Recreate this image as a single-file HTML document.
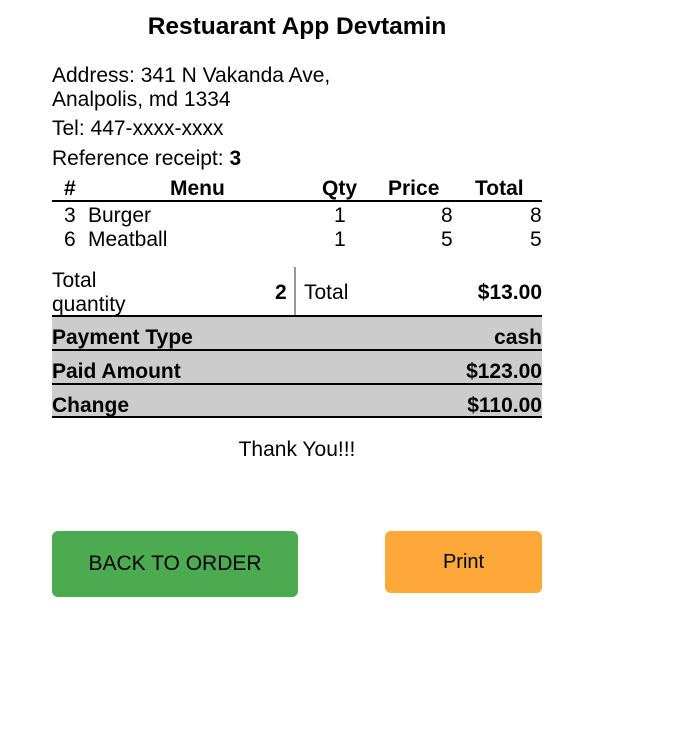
<!DOCTYPE html>
<html><head><style>
body{margin:0;width:697px;height:742px;background:#fff;font-family:"Liberation Sans",Arial,sans-serif;color:#000;position:relative;font-size:21px}
div{position:absolute;white-space:nowrap}
.b{font-weight:bold}
.r{text-align:right}
.line{background:#000;height:2px;left:52px;width:490px}
.gray{background:#ccc;left:52px;width:490px;height:32px}
</style></head><body>
<div class="b" style="left:0;width:594px;text-align:center;top:13px;font-size:24.5px">Restuarant App Devtamin</div>
<div style="left:52px;top:64px;line-height:24px">Address: 341 N Vakanda Ave,<br>Analpolis, md 1334</div>
<div style="left:52px;top:117px">Tel: 447-xxxx-xxxx</div>
<div style="left:52px;top:147px">Reference receipt: <b>3</b></div>
<div class="b" style="left:64px;top:177px">#</div>
<div class="b" style="left:170px;top:177px">Menu</div>
<div class="b" style="left:322px;top:177px">Qty</div>
<div class="b" style="left:388px;top:177px">Price</div>
<div class="b" style="left:475px;top:177px">Total</div>
<div class="line" style="top:200px"></div>
<div style="left:64px;top:204px">3</div><div style="left:88px;top:204px">Burger</div>
<div style="left:334px;top:204px">1</div><div style="left:441px;top:204px">8</div><div style="left:530px;top:204px">8</div>
<div style="left:64px;top:228px">6</div><div style="left:88px;top:228px">Meatball</div>
<div style="left:334px;top:228px">1</div><div style="left:441px;top:228px">5</div><div style="left:530px;top:228px">5</div>
<div style="left:52px;top:269px;line-height:24px">Total<br>quantity</div>
<div class="b" style="left:275px;top:281px">2</div>
<div style="left:294px;top:267px;width:2px;height:48px;background:#999"></div>
<div style="left:304px;top:281px">Total</div>
<div class="b r" style="left:400px;width:142px;top:281px">$13.00</div>
<div class="line" style="top:315px"></div>
<div class="gray" style="top:317px"></div>
<div class="b" style="left:52px;top:326px">Payment Type</div><div class="b r" style="left:400px;width:142px;top:326px">cash</div>
<div class="line" style="top:349px"></div>
<div class="gray" style="top:351px"></div>
<div class="b" style="left:52px;top:360px">Paid Amount</div><div class="b r" style="left:400px;width:142px;top:360px">$123.00</div>
<div class="line" style="top:383px"></div>
<div class="gray" style="top:385px"></div>
<div class="b" style="left:52px;top:394px">Change</div><div class="b r" style="left:400px;width:142px;top:394px">$110.00</div>
<div class="line" style="top:416px"></div>
<div style="left:0;width:594px;text-align:center;top:438px">Thank You!!!</div>
<div style="left:52px;top:531px;width:246px;height:66px;background:#4caa50;border-radius:6px;text-align:center;line-height:66px;font-size:21px">BACK TO ORDER</div>
<div style="left:385px;top:531px;width:157px;height:62px;background:#ffa83a;border-radius:6px;text-align:center;line-height:62px;font-size:20px">Print</div>
</body></html>
